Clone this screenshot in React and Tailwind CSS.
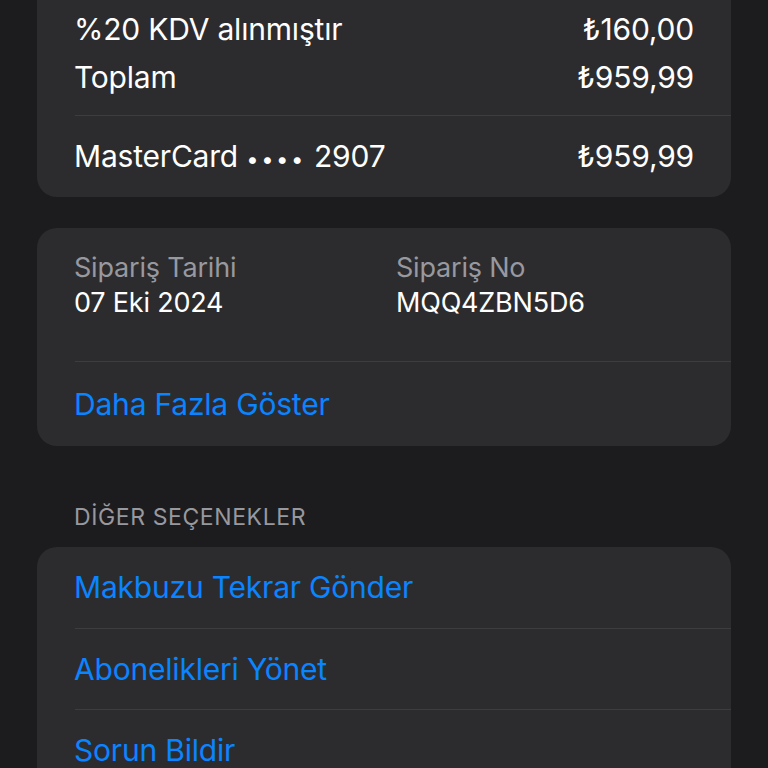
const font = { fontFamily: '"Inter", "Roboto", "Liberation Sans", sans-serif' };

function Sep() {
  return <div className="ml-[38px] h-px bg-[#3d3d41]" />;
}

function LinkRow({ children, h = 'h-[81px]' }) {
  return (
    <div className={`flex ${h} items-center px-[37px] text-[30px] tracking-[-0.2px] text-[#0a84ff]`}>
      {children}
    </div>
  );
}

export default function App() {
  return (
    <div className="h-[768px] overflow-hidden bg-[#1c1c1e] px-[37px]" style={font}>
      <section className="rounded-b-[20px] bg-[#2c2c2e] pt-[5px]">
        <div className="px-[37px] pb-[14px] text-[30px] tracking-[-0.2px] text-white">
          <div className="flex h-[48px] items-center justify-between">
            <span>%20 KDV alınmıştır</span>
            <span>₺160,00</span>
          </div>
          <div className="flex h-[48px] items-center justify-between">
            <span>Toplam</span>
            <span>₺959,99</span>
          </div>
        </div>
        <Sep />
        <div className="flex h-[81px] items-center justify-between px-[37px] text-[30px] tracking-[-0.2px] text-white">
          <span>
            MasterCard <span className="text-[22px] tracking-[2.5px]">••••</span> 2907
          </span>
          <span>₺959,99</span>
        </div>
      </section>

      <section className="mt-[31px] rounded-[20px] bg-[#2c2c2e]">
        <div className="grid grid-cols-[322px_1fr] px-[37px] pt-[22px] pb-[41px] text-[27px] tracking-[-0.2px]">
          <div>
            <div className="leading-[35px] text-[#98989f]">Sipariş Tarihi</div>
            <div className="leading-[35px] text-white">07 Eki 2024</div>
          </div>
          <div>
            <div className="leading-[35px] text-[#98989f]">Sipariş No</div>
            <div className="leading-[35px] text-white">MQQ4ZBN5D6</div>
          </div>
        </div>
        <Sep />
        <LinkRow h="h-[84px]">Daha Fazla Göster</LinkRow>
      </section>

      <h3 className="mt-[58px] px-[37px] text-[23px] leading-[26px] tracking-[0.6px] text-[#98989f]">
        DİĞER SEÇENEKLER
      </h3>

      <section className="mt-[17px] rounded-[20px] bg-[#2c2c2e]">
        <LinkRow>Makbuzu Tekrar Gönder</LinkRow>
        <Sep />
        <LinkRow h="h-[80px]">Abonelikleri Yönet</LinkRow>
        <Sep />
        <LinkRow>Sorun Bildir</LinkRow>
      </section>
    </div>
  );
}
